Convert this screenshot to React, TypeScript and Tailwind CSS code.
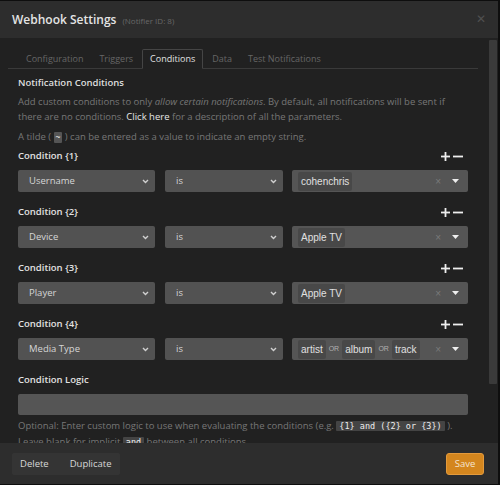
import React from "react";

const Chevron = () => (
  <svg width="7" height="5" viewBox="0 0 7 5" className="shrink-0">
    <path d="M1 1 L3.5 3.5 L6 1" stroke="#d0d0d0" strokeWidth="1.4" fill="none" />
  </svg>
);

const PlusMinus = () => (
  <div className="flex items-center gap-[3px] mr-[5px]">
    <svg width="9" height="9" viewBox="0 0 9 9">
      <rect x="3.6" y="0" width="1.8" height="9" fill="#eeeeee" />
      <rect x="0" y="3.6" width="9" height="1.8" fill="#eeeeee" />
    </svg>
    <svg width="10" height="9" viewBox="0 0 10 9">
      <rect x="0" y="3.6" width="10" height="1.8" fill="#eeeeee" />
    </svg>
  </div>
);

const Select = ({ label, w }: { label: string; w: string }) => (
  <div className={`${w} h-[22px] bg-[#525252] rounded-[2px] flex items-center justify-between pl-[11px] pr-[6px] text-[#d6d6d6] text-[9.5px]`}>
    <span>{label}</span>
    <Chevron />
  </div>
);

const Chip = ({ t }: { t: string }) => (
  <span className="h-[19px] px-[3px] flex items-center bg-[#484848] rounded-[2px] text-[#e0e0e0] text-[10px] font-['Liberation_Sans',sans-serif]">
    {t}
  </span>
);

const Or = () => (
  <span className="text-[7px] text-[#b0b0b0] font-['Liberation_Sans',sans-serif] px-[3px]">OR</span>
);

const ValueBox = ({ children }: { children: React.ReactNode }) => (
  <div className="flex-1 h-[22px] bg-[#555555] rounded-[2px] flex items-center pl-[6px] pr-[9px]">
    <div className="flex items-center flex-1">{children}</div>
    <span className="text-[#7a7a7a] text-[10px] mr-[11px] font-['Liberation_Sans',sans-serif]">×</span>
    <svg width="7" height="4" viewBox="0 0 7 4">
      <path d="M0 0 L7 0 L3.5 4 Z" fill="#eeeeee" />
    </svg>
  </div>
);

const Condition = ({ n, field, children, first }: { n: number; field: string; children: React.ReactNode; first?: boolean }) => (
  <div className={first ? "mt-[5px]" : "mt-[13px]"}>
    <div className="h-[14px] flex items-center justify-between">
      <span className="text-[#e2e2e2] font-semibold text-[9.5px]">Condition {"{"}{n}{"}"}</span>
      <PlusMinus />
    </div>
    <div className="mt-[7px] flex items-center">
      <Select label={field} w="w-[137px]" />
      <div className="w-[10px]" />
      <Select label="is" w="w-[118px]" />
      <div className="w-[9px]" />
      <ValueBox>{children}</ValueBox>
    </div>
  </div>
);

export default function App() {
  const tabs = ["Configuration", "Triggers", "Conditions", "Data", "Test Notifications"];
  return (
    <div className="w-[500px] h-[485px] bg-[#0e0e0e] overflow-hidden font-['Open_Sans',sans-serif]">
      <div className="w-[498px] h-[483px] mt-[1px] flex flex-col overflow-hidden">
        {/* header */}
        <div className="h-[37px] shrink-0 bg-[#2d2d2d] flex items-center px-[12px] relative">
          <span className="text-[#e4e4e4] text-[12px] font-semibold">Webhook Settings</span>
          <span className="text-[#686868] text-[8px] ml-[6px] mt-[2px]">(Notifier ID: 8)</span>
          <span className="absolute right-[12px] top-[9px] text-[#505050] text-[12px] font-['Liberation_Sans',sans-serif]">✕</span>
        </div>
        {/* body */}
        <div className="flex-1 flex bg-[#212121] overflow-hidden">
          <div className="w-[489px] pl-[8px] pr-[11px] overflow-hidden">
            <div className="mt-[11px] flex pl-[11px] border-b border-[#3a3a3a] h-[20px]">
              {tabs.map((t) =>
                t === "Conditions" ? (
                  <div key={t} className="h-[20px] px-[7px] mr-[2px] flex items-center border border-[#454545] border-b-[#212121] bg-[#212121] rounded-t-[2px] text-[#e2e2e2] text-[9px]">
                    {t}
                  </div>
                ) : (
                  <div key={t} className="h-[19px] px-[7px] mr-[2px] flex items-center text-[#666] text-[9px]">
                    {t}
                  </div>
                )
              )}
            </div>
            <div className="px-[10px]">
              <div className="mt-[7px] h-[14px] flex items-center text-[#dedede] font-semibold text-[9.5px]">Notification Conditions</div>
              <div className="mt-[4px] text-[#777] text-[9.5px] leading-[15px]">
                <div className="whitespace-nowrap">
                  Add custom conditions to only <i>allow certain notifications</i>. By default, all notifications will be sent if
                </div>
                <div className="whitespace-nowrap">
                  there are no conditions. <span className="text-[#e6e6e6]">Click here</span> for a description of all the parameters.
                </div>
              </div>
              <div className="mt-[5px] text-[#777] text-[9.5px] leading-[15px] whitespace-nowrap">
                A tilde ({" "}
                <span className="inline-block bg-[#555] text-[#eee] px-[2px] leading-[11px] rounded-[1px] font-['DejaVu_Sans_Mono',monospace] text-[8px]">~</span>
                {" "}) can be entered as a value to indicate an empty string.
              </div>
              <Condition n={1} field="Username" first>
                <Chip t="cohenchris" />
              </Condition>
              <Condition n={2} field="Device">
                <Chip t="Apple TV" />
              </Condition>
              <Condition n={3} field="Player">
                <Chip t="Apple TV" />
              </Condition>
              <Condition n={4} field="Media Type">
                <Chip t="artist" />
                <Or />
                <Chip t="album" />
                <Or />
                <Chip t="track" />
              </Condition>
              <div className="mt-[13px] h-[14px] flex items-center text-[#e2e2e2] font-semibold text-[9.5px]">Condition Logic</div>
              <div className="mt-[7px] h-[21px] bg-[#555] rounded-[2px]" />
              <div className="mt-[3px] text-[#777] text-[9.5px] leading-[15px]">
                <div className="whitespace-nowrap">
                  Optional: Enter custom logic to use when evaluating the conditions (e.g.{" "}
                  <span className="bg-[#444] text-[#eee] px-[3px] rounded-[1px] font-['DejaVu_Sans_Mono',monospace] text-[8.5px]">{"{1} and ({2} or {3})"}</span>
                  {" "}).
                </div>
                <div className="whitespace-nowrap">
                  Leave blank for implicit{" "}
                  <span className="bg-[#444] text-[#eee] px-[3px] rounded-[1px] font-['DejaVu_Sans_Mono',monospace] text-[8.5px]">and</span>
                  {" "}between all conditions.
                </div>
              </div>
            </div>
          </div>
          <div className="w-[9px] pt-[2px]">
            <div className="w-[8px] h-[344px] bg-[#3a3a3a] rounded-[1px]" />
          </div>
        </div>
        {/* footer */}
        <div className="h-[41px] shrink-0 bg-[#2d2d2d] flex items-start justify-between pt-[10px] pl-[12px] pr-[14px]">
          <div className="flex h-[22px] bg-[#343434] rounded-[2px] text-[#d8d8d8] text-[9.5px]">
            <div className="flex items-center pl-[8px] pr-[10px]">Delete</div>
            <div className="flex items-center pl-[11px] pr-[8px]">Duplicate</div>
          </div>
          <div className="h-[22px] w-[38px] bg-[#d4861e] border border-[#e39a3c] rounded-[3px] flex items-center justify-center text-[#f4e4cf] text-[9.5px]">
            Save
          </div>
        </div>
      </div>
    </div>
  );
}
